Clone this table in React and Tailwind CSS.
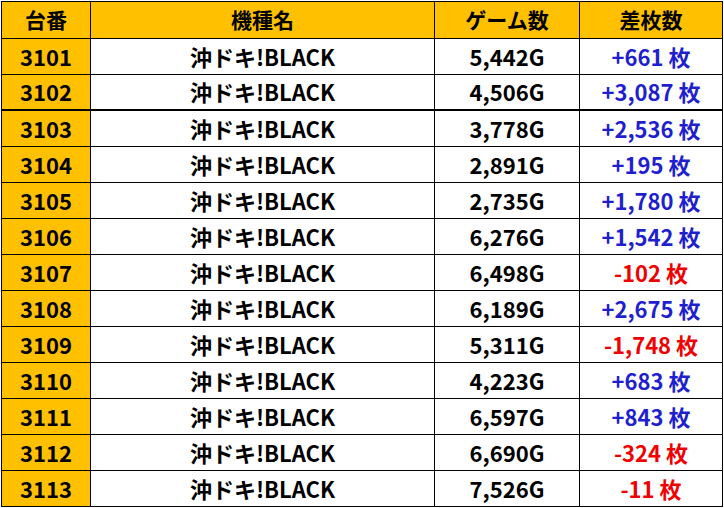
import React from 'react';

const rows = [
  { no: '3101', games: '5,442G', diff: '+661' },
  { no: '3102', games: '4,506G', diff: '+3,087' },
  { no: '3103', games: '3,778G', diff: '+2,536' },
  { no: '3104', games: '2,891G', diff: '+195' },
  { no: '3105', games: '2,735G', diff: '+1,780' },
  { no: '3106', games: '6,276G', diff: '+1,542' },
  { no: '3107', games: '6,498G', diff: '-102' },
  { no: '3108', games: '6,189G', diff: '+2,675' },
  { no: '3109', games: '5,311G', diff: '-1,748' },
  { no: '3110', games: '4,223G', diff: '+683' },
  { no: '3111', games: '6,597G', diff: '+843' },
  { no: '3112', games: '6,690G', diff: '-324' },
  { no: '3113', games: '7,526G', diff: '-11' },
];

const font = { fontFamily: '"Noto Sans CJK JP", "Noto Sans", sans-serif' };

const App = () => {
  return (
    <div className="w-[724px] h-[508px] bg-white pt-px pl-px" style={font}>
      <div className="w-[722px] border border-black font-bold text-black">
        {/* ヘッダー */}
        <div className="flex h-[37px] border-b border-black bg-[#ffc000] text-[21px]">
          <div className="w-[89px] border-r border-black flex items-center justify-center">台番</div>
          <div className="w-[344px] border-r border-black flex items-center justify-center">機種名</div>
          <div className="w-[145px] border-r border-black flex items-center justify-center">ゲーム数</div>
          <div className="flex-1 flex items-center justify-center">差枚数</div>
        </div>

        {rows.map((r, i) => (
          <div
            key={r.no}
            className={
              i === 1
                ? 'flex h-[36px] border-b-2 border-black text-[22px]'
                : i === rows.length - 1
                ? 'flex h-[35px] text-[22px]'
                : 'flex h-[36px] border-b border-black text-[22px]'
            }
          >
            <div className="w-[89px] border-r border-black bg-[#ffc000] flex items-center justify-center pb-px">{r.no}</div>
            <div className="w-[344px] border-r border-black flex items-center justify-center pb-px">沖ドキ!BLACK</div>
            <div className="w-[145px] border-r border-black flex items-center justify-center pb-px">{r.games}</div>
            <div
              className={
                r.diff.startsWith('-')
                  ? 'flex-1 flex items-center justify-center pb-px text-[#f00000]'
                  : 'flex-1 flex items-center justify-center pb-px text-[#1f1fd0]'
              }
            >
              {r.diff} 枚
            </div>
          </div>
        ))}
      </div>
    </div>
  );
};

export default App;
